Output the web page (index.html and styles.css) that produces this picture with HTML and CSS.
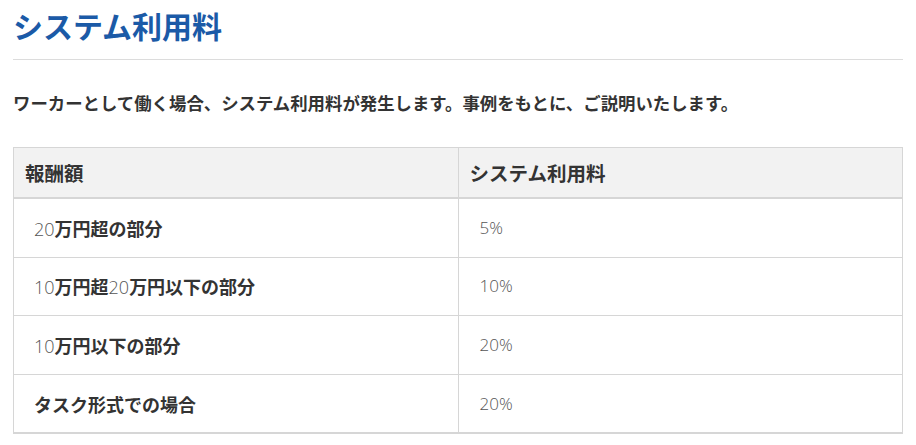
FILE: index.html
```html
<!DOCTYPE html>
<html lang="ja">
<head>
<meta charset="utf-8">
<title>システム利用料</title>
<link rel="stylesheet" href="styles.css">
</head>
<body>
<main class="page">
  <h2 class="title">システム利用料</h2>
  <hr class="rule">
  <p class="lead">ワーカーとして働く場合、システム利用料が発生します。事例をもとに、ご説明いたします。</p>
  <table class="fees">
    <thead>
      <tr>
        <th>報酬額</th>
        <th>システム利用料</th>
      </tr>
    </thead>
    <tbody>
      <tr>
        <td><span class="num">20</span>万円超の部分</td>
        <td class="rate">5%</td>
      </tr>
      <tr>
        <td><span class="num">10</span>万円超<span class="num">20</span>万円以下の部分</td>
        <td class="rate">10%</td>
      </tr>
      <tr>
        <td><span class="num">10</span>万円以下の部分</td>
        <td class="rate">20%</td>
      </tr>
      <tr>
        <td>タスク形式での場合</td>
        <td class="rate">20%</td>
      </tr>
    </tbody>
  </table>
</main>
</body>
</html>
```

FILE: styles.css
```css
html, body {
  margin: 0;
  padding: 0;
  background: #ffffff;
}

body {
  font-family: "Noto Sans CJK JP", "Noto Sans", sans-serif;
  color: #333333;
}

.page {
  padding: 4px 13px 0 13px;
}

.title {
  margin: 0;
  font-size: 30px;
  line-height: 42px;
  font-weight: 700;
  color: #1b5aa7;
}

.rule {
  margin: 13px 0 0 0;
  border: 0;
  border-top: 1px solid #dcdcdc;
  height: 0;
}

.lead {
  margin: 28px 0 0 0;
  font-size: 17.4px;
  line-height: 30.6px;
  font-weight: 700;
  color: #333333;
}

.fees {
  margin-top: 28.4px;
  width: 100%;
  border-collapse: collapse;
  table-layout: fixed;
  border: 1px solid #d6d6d6;
  border-bottom-width: 2px;
}

.fees th {
  background: #f2f2f2;
  text-align: left;
  font-size: 19.5px;
  line-height: 31px;
  font-weight: 700;
  padding: 9px 11px;
  border-left: 1px solid #d6d6d6;
  border-bottom: 2px solid #d6d6d6;
  color: #333333;
}

.fees td {
  font-size: 18px;
  line-height: 28px;
  height: 28px;
  font-weight: 700;
  padding: 14.8px 20px;
  border-left: 1px solid #d6d6d6;
  border-bottom: 1px solid #d6d6d6;
  color: #333333;
  vertical-align: middle;
}

.fees .num {
  font-family: "Open Sans", "Noto Sans", sans-serif;
  font-weight: 300;
  color: #555555;
  line-height: 1;
}

.fees .rate {
  font-family: "Open Sans", "Noto Sans", sans-serif;
  font-weight: 300;
  color: #555555;
  font-size: 17px;
  padding-left: 21px;
}
```
